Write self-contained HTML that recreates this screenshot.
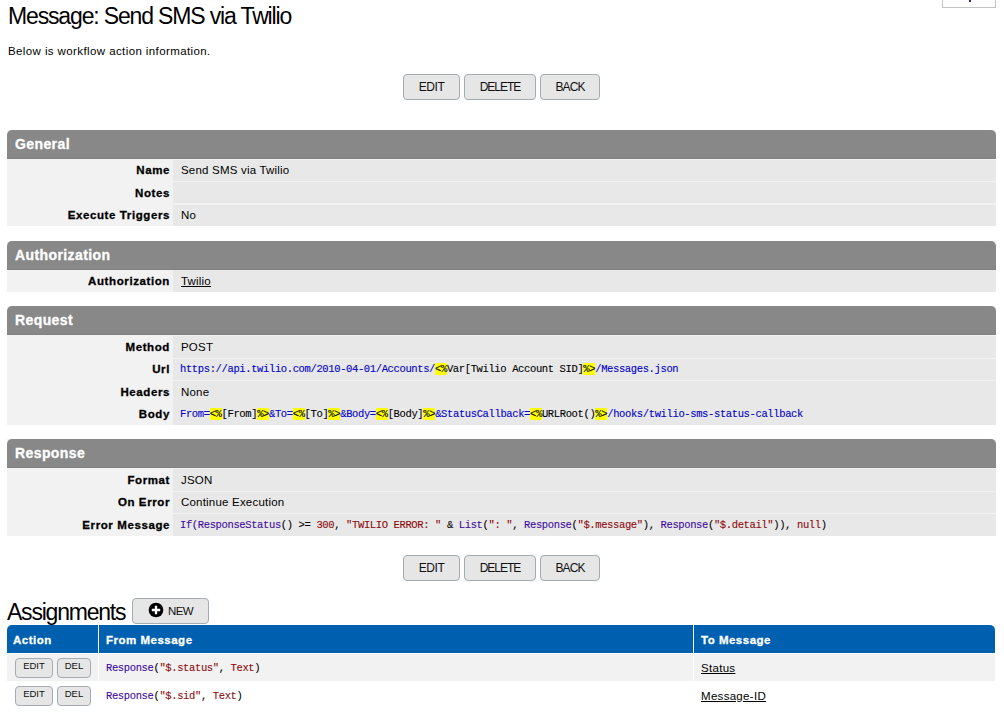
<!DOCTYPE html>
<html><head><meta charset="utf-8">
<style>
*{box-sizing:border-box;margin:0;padding:0}
html,body{width:1004px;height:719px;overflow:hidden;background:#fff}
body{position:relative;font-family:"Liberation Sans",sans-serif;color:#000}
.a{position:absolute;white-space:nowrap}
.title{left:8px;top:3px;font-size:23px;line-height:26px;letter-spacing:-1.15px}
.intro{left:8px;top:44px;font-size:11.5px;line-height:14px;letter-spacing:0.4px}
.btn{position:absolute;height:26px;border:1px solid #a3acb0;border-radius:4px;background:#e6e6e6;font-size:12px;line-height:24px;text-align:center;color:#111}
.sbg{position:absolute;left:7px;width:989px;background:#f2f2f2}
.sh{position:absolute;left:7px;width:989px;height:29px;background:#888;border-radius:5px 5px 0 0;border-bottom:1px solid #808080;color:#fff;font-weight:bold;font-size:14px;line-height:29px;padding-left:8px;letter-spacing:0.4px;-webkit-text-stroke:0.3px #fff}
.cell{position:absolute;left:173px;width:823px;background:#e8e8e8}
.lab{position:absolute;left:7px;width:163px;text-align:right;font-weight:bold;font-size:11.5px;line-height:14px;letter-spacing:0.6px;white-space:nowrap;-webkit-text-stroke:0.3px #000}
.val{position:absolute;left:181px;font-size:11.5px;line-height:14px;letter-spacing:0.2px;white-space:nowrap}
.code{font-family:"Liberation Mono",monospace;font-size:10.5px;letter-spacing:-0.37px;line-height:13px;-webkit-text-stroke:0.1px currentColor;margin-left:-1px}
.lit{color:#0000c8}
.hl{background:#ffff00}
.fn{color:#3d0aa0}
.str{color:#8c0c0c}
a{color:#000;text-decoration:underline}
.th{position:absolute;top:625px;height:28px;background:#0060b0;color:#fff;font-weight:bold;font-size:11.5px;line-height:31px;padding-left:7px;letter-spacing:0.5px;-webkit-text-stroke:0.3px #fff}
.sbtn{position:absolute;height:20px;border:1px solid #a3acb0;border-radius:4px;background:#e6e6e6;font-size:9.5px;line-height:14px;text-align:center;color:#111}
</style></head>
<body>
<div class="a" style="left:942px;top:-20px;width:54px;height:28px;border:1px solid #c4c4c4;background:#fff"></div>
<div class="a" style="left:969px;top:0;width:1.5px;height:2px;background:#40207a"></div>
<div class="a title">Message: Send SMS via Twilio</div>
<div class="a intro">Below is workflow action information.</div>
<div class="btn" style="left:403px;top:74px;width:57px;letter-spacing:-0.4px">EDIT</div>
<div class="btn" style="left:464px;top:74px;width:72px;letter-spacing:-1px">DELETE</div>
<div class="btn" style="left:540px;top:74px;width:60px;letter-spacing:-0.9px">BACK</div>
<div class="btn" style="left:403px;top:555px;width:57px;letter-spacing:-0.4px">EDIT</div>
<div class="btn" style="left:464px;top:555px;width:72px;letter-spacing:-1px">DELETE</div>
<div class="btn" style="left:540px;top:555px;width:60px;letter-spacing:-0.9px">BACK</div>
<div class="sbg" style="top:130px;height:96px"></div>
<div class="sh" style="top:130px">General</div>
<div class="cell" style="top:160px;height:21px"></div>
<div class="cell" style="top:182px;height:21px"></div>
<div class="cell" style="top:205px;height:21px"></div>
<div class="lab" style="top:163px">Name</div>
<div class="val " style="top:163px">Send SMS via Twilio</div>
<div class="lab" style="top:186px">Notes</div>
<div class="lab" style="top:208px">Execute Triggers</div>
<div class="val " style="top:208px">No</div>
<div class="sbg" style="top:241px;height:51px"></div>
<div class="sh" style="top:241px">Authorization</div>
<div class="cell" style="top:270px;height:22px"></div>
<div class="lab" style="top:274px">Authorization</div>
<div class="val " style="top:274px"><a>Twilio</a></div>
<div class="sbg" style="top:306px;height:119px"></div>
<div class="sh" style="top:306px">Request</div>
<div class="cell" style="top:336px;height:22px"></div>
<div class="cell" style="top:359px;height:21px"></div>
<div class="cell" style="top:381px;height:44px"></div>
<div class="lab" style="top:340px">Method</div>
<div class="val " style="top:340px">POST</div>
<div class="lab" style="top:362px">Url</div>
<div class="val code" style="top:363px"><span class="lit">https://api.twilio.com/2010-04-01/Accounts/</span><span class="hl">&lt;%</span>Var[Twilio Account SID]<span class="hl">%&gt;</span><span class="lit">/Messages.json</span></div>
<div class="lab" style="top:385px">Headers</div>
<div class="val " style="top:385px">None</div>
<div class="lab" style="top:407px">Body</div>
<div class="val code" style="top:408px"><span class="lit">From=</span><span class="hl">&lt;%</span>[From]<span class="hl">%&gt;</span><span class="lit">&amp;To=</span><span class="hl">&lt;%</span>[To]<span class="hl">%&gt;</span><span class="lit">&amp;Body=</span><span class="hl">&lt;%</span>[Body]<span class="hl">%&gt;</span><span class="lit">&amp;StatusCallback=</span><span class="hl">&lt;%</span>URLRoot()<span class="hl">%&gt;</span><span class="lit">/hooks/twilio-sms-status-callback</span></div>
<div class="sbg" style="top:439px;height:97px"></div>
<div class="sh" style="top:439px">Response</div>
<div class="cell" style="top:469px;height:22px"></div>
<div class="cell" style="top:492px;height:21px"></div>
<div class="cell" style="top:514px;height:22px"></div>
<div class="lab" style="top:473px">Format</div>
<div class="val " style="top:473px">JSON</div>
<div class="lab" style="top:495px">On Error</div>
<div class="val " style="top:495px">Continue Execution</div>
<div class="lab" style="top:518px">Error Message</div>
<div class="val code" style="top:519px"><span class="fn">If(ResponseStatus</span>() &gt;= <span class="str">300</span>, <span class="str">"TWILIO ERROR: "</span> &amp; <span class="fn">List</span>(<span class="str">": "</span>, <span class="fn">Response</span>(<span class="str">"$.message"</span>), <span class="fn">Response</span>(<span class="str">"$.detail"</span>)), <span class="str">null</span>)</div>
<div class="a" style="left:7px;top:599px;font-size:23px;line-height:26px;letter-spacing:-1.22px">Assignments</div>
<div class="btn" style="left:132px;top:598px;width:77px;height:26px"></div>
<svg class="a" style="left:148px;top:602px" width="16" height="16" viewBox="0 0 16 16"><circle cx="8" cy="8" r="7.3" fill="#000"/><path d="M8 3.8v8.4M3.8 8h8.4" stroke="#fff" stroke-width="2.3"/></svg>
<div class="a" style="left:168px;top:604px;font-size:11.5px;line-height:14px;color:#111;letter-spacing:-0.6px">NEW</div>
<div class="th" style="left:7px;width:91px;border-radius:5px 0 0 0;padding-left:6px">Action</div>
<div class="th" style="left:99px;width:594px">From Message</div>
<div class="th" style="left:694px;width:301px;border-radius:0 5px 0 0">To Message</div>
<div class="a" style="left:7px;top:654px;width:91px;height:27px;background:#f2f2f2"></div>
<div class="a" style="left:99px;top:654px;width:594px;height:27px;background:#f2f2f2"></div>
<div class="a" style="left:694px;top:654px;width:301px;height:27px;background:#f2f2f2"></div>
<div class="sbtn" style="left:15px;top:658px;width:38px">EDIT</div>
<div class="sbtn" style="left:57px;top:658px;width:34px">DEL</div>
<div class="a code" style="left:107px;top:662px"><span class="fn">Response</span>(<span class="str">"$.status"</span>, <span class="str">Text</span>)</div>
<div class="a" style="left:701px;top:661px;font-size:11.5px;line-height:14px;letter-spacing:0.3px"><a>Status</a></div>
<div class="sbtn" style="left:15px;top:686px;width:38px">EDIT</div>
<div class="sbtn" style="left:57px;top:686px;width:34px">DEL</div>
<div class="a code" style="left:107px;top:690px"><span class="fn">Response</span>(<span class="str">"$.sid"</span>, <span class="str">Text</span>)</div>
<div class="a" style="left:701px;top:689px;font-size:11.5px;line-height:14px;letter-spacing:0.3px"><a>Message-ID</a></div>
</body></html>
